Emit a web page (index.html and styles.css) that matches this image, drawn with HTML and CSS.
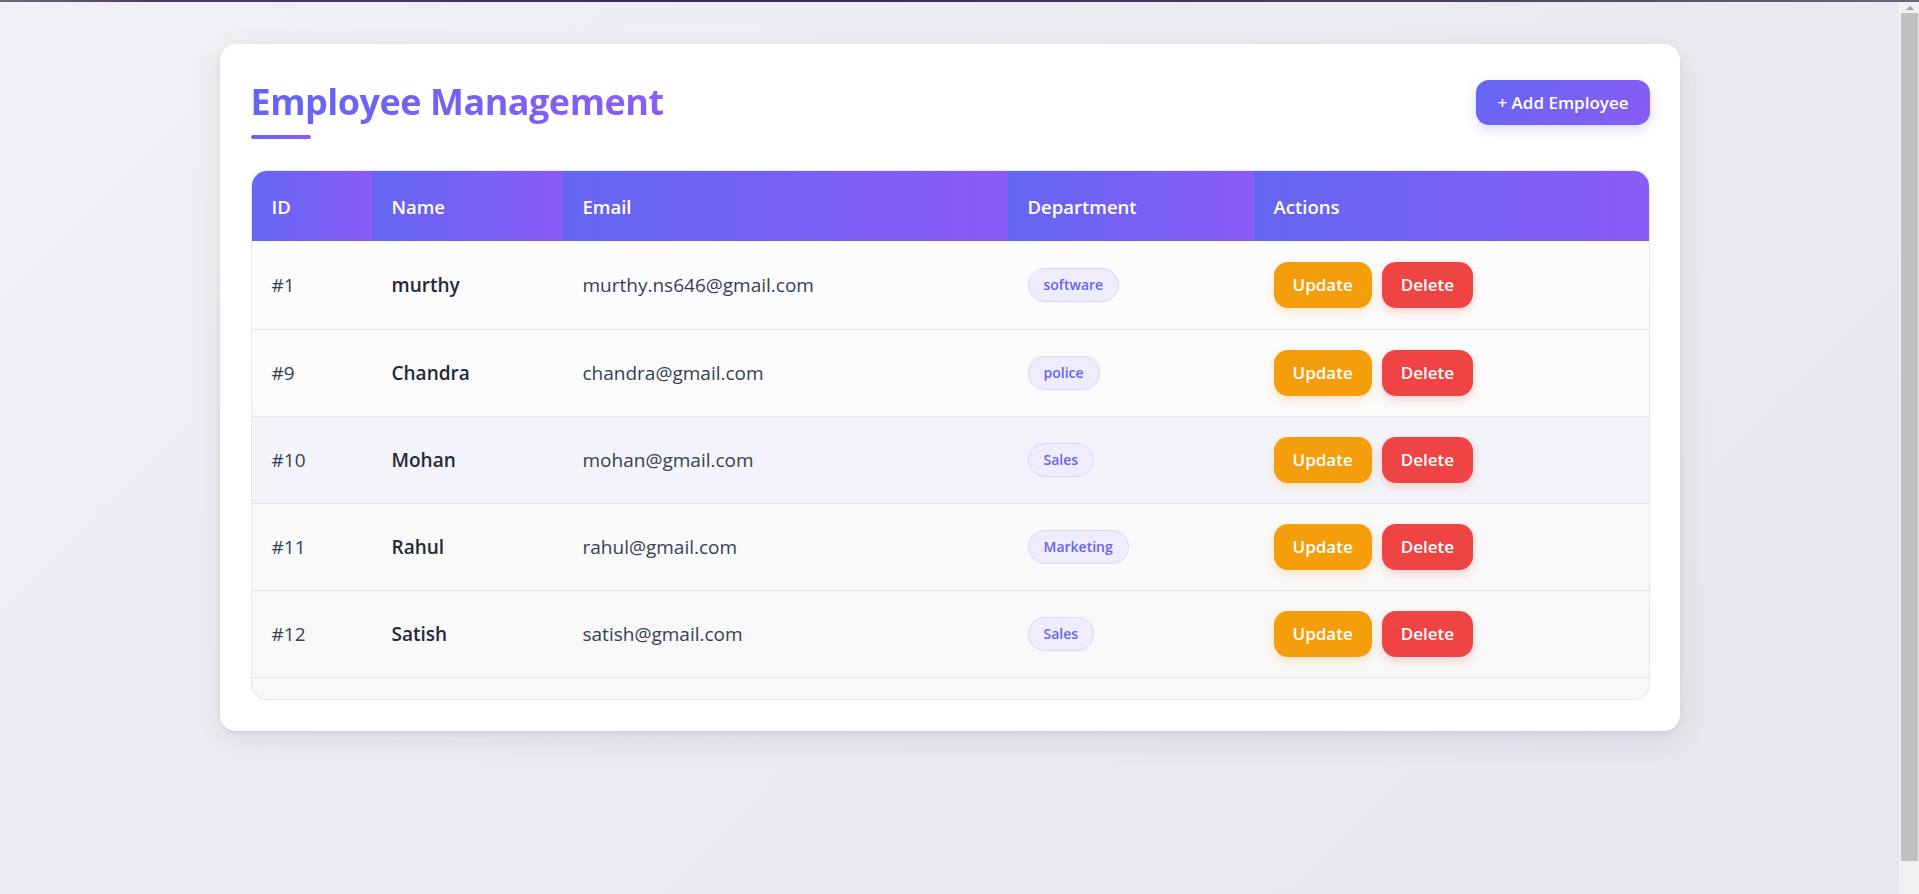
FILE: index.html
```html
<!DOCTYPE html>
<html lang="en">
<head>
<meta charset="utf-8">
<title>Employee Management</title>
<link rel="stylesheet" href="styles.css">
</head>
<body>
<div class="topline"></div>
<div class="frame">
<main class="page">
  <section class="card">
    <header class="card-header">
      <div class="title-block">
        <h1 class="title">Employee Management</h1>
        <span class="title-bar"></span>
      </div>
      <button class="btn-add">+ Add Employee</button>
    </header>

    <div class="table-wrap">
      <table class="emp-table">
        <colgroup>
          <col class="c-id"><col class="c-name"><col class="c-email"><col class="c-dept"><col class="c-act">
        </colgroup>
        <thead>
          <tr><th>ID</th><th>Name</th><th>Email</th><th>Department</th><th>Actions</th></tr>
        </thead>
        <tbody>
          <tr>
            <td class="id">#1</td><td class="name">murthy</td><td class="email">murthy.ns646@gmail.com</td>
            <td><span class="badge">software</span></td>
            <td><div class="actions"><button class="btn btn-update">Update</button><button class="btn btn-delete">Delete</button></div></td>
          </tr>
          <tr>
            <td class="id">#9</td><td class="name">Chandra</td><td class="email">chandra@gmail.com</td>
            <td><span class="badge">police</span></td>
            <td><div class="actions"><button class="btn btn-update">Update</button><button class="btn btn-delete">Delete</button></div></td>
          </tr>
          <tr class="is-hover">
            <td class="id">#10</td><td class="name">Mohan</td><td class="email">mohan@gmail.com</td>
            <td><span class="badge">Sales</span></td>
            <td><div class="actions"><button class="btn btn-update">Update</button><button class="btn btn-delete">Delete</button></div></td>
          </tr>
          <tr>
            <td class="id">#11</td><td class="name">Rahul</td><td class="email">rahul@gmail.com</td>
            <td><span class="badge">Marketing</span></td>
            <td><div class="actions"><button class="btn btn-update">Update</button><button class="btn btn-delete">Delete</button></div></td>
          </tr>
          <tr>
            <td class="id">#12</td><td class="name">Satish</td><td class="email">satish@gmail.com</td>
            <td><span class="badge">Sales</span></td>
            <td><div class="actions"><button class="btn btn-update">Update</button><button class="btn btn-delete">Delete</button></div></td>
          </tr>
        </tbody>
      </table>
      <div class="table-foot"></div>
    </div>
  </section>
</main>
<div class="scrollbar" aria-hidden="true">
  <span class="sb-arrow"></span>
  <span class="sb-thumb"></span>
</div>
</div>
</body>
</html>
```

FILE: styles.css
```css
* { box-sizing: border-box; }

html, body { height: 100%; }

body {
  margin: 0;
  overflow: hidden;
  display: flex;
  flex-direction: column;
  font-family: "Open Sans", "Noto Sans", sans-serif;
  color: #1f2937;
  background: #f0f0f0;
}

.topline {
  height: 2px;
  flex: none;
  background: linear-gradient(90deg, #6d6875 0%, #4a3868 8%, #3b2a5c 40%, #4b3d66 75%, #6b6776 100%);
}

.frame {
  flex: 1;
  display: flex;
  min-height: 0;
}

.page {
  flex: 1;
  display: flex;
  justify-content: center;
  align-items: flex-start;
  padding-top: 42px;
  background: linear-gradient(135deg, #f0f1f4 0%, #e6e7ec 100%);
}

.scrollbar {
  width: 20px;
  flex: none;
  display: flex;
  flex-direction: column;
  align-items: flex-end;
  background: #f0f0f0;
}

.sb-arrow {
  width: 0;
  height: 0;
  margin: 4px 5px 3px 0;
  border-left: 4px solid transparent;
  border-right: 4px solid transparent;
  border-bottom: 4px solid #a3a3a3;
}

.sb-thumb {
  width: 17px;
  height: 848px;
  margin-right: 1px;
  background: #c1c1c1;
}

.card {
  width: 1460px;
  background: #ffffff;
  border-radius: 16px;
  padding: 34px 30px 31px 31px;
  box-shadow: 0 10px 30px rgba(60, 60, 90, 0.10), 0 2px 4px rgba(60, 60, 90, 0.08);
}

.card-header {
  display: flex;
  justify-content: space-between;
  align-items: flex-start;
  margin-bottom: 31px;
}

.title {
  margin: 0;
  font-size: 36px;
  line-height: 48px;
  font-weight: 700;
  letter-spacing: -0.5px;
  background: linear-gradient(90deg, #6366f1, #8b5cf6);
  -webkit-background-clip: text;
  background-clip: text;
  color: transparent;
  display: inline-block;
}

.title-bar {
  display: block;
  width: 60px;
  height: 4px;
  margin-top: 9px;
  border-radius: 2px;
  background: linear-gradient(90deg, #6366f1, #8b5cf6);
}

.btn-add {
  margin-top: 2px;
  height: 45px;
  padding: 0 21px;
  border: none;
  border-radius: 13px;
  font-family: inherit;
  font-size: 17px;
  font-weight: 600;
  color: #ffffff;
  background: linear-gradient(135deg, #6366f1, #8b5cf6);
  box-shadow: 0 4px 12px rgba(99, 102, 241, 0.25);
}

.table-wrap {
  border: 1px solid #e5e7eb;
  border-radius: 16px;
  overflow: hidden;
  background: linear-gradient(180deg, #fdfdfd 0%, #f8f8f8 100%);
}

.emp-table {
  width: 100%;
  border-collapse: collapse;
  table-layout: fixed;
}

.c-id { width: 120px; }
.c-name { width: 191px; }
.c-email { width: 445px; }
.c-dept { width: 246px; }

.emp-table th {
  height: 70px;
  padding: 0 20px;
  text-align: left;
  font-size: 18.5px;
  font-weight: 600;
  color: #ffffff;
  background: linear-gradient(90deg, #6366f1, #8b5cf6);
}

.emp-table tbody tr {
  height: 87px;
  border-bottom: 1px solid #e5e7eb;
}

.emp-table tbody tr:first-child {
  height: 88px;
}

.emp-table tbody tr.is-hover {
  background: #f3f4fa;
  border-bottom-color: #e2e3ee;
}

.emp-table td {
  padding: 0 20px;
  font-size: 19px;
  vertical-align: middle;
}

.id { color: #374151; }
.name { font-weight: 600; color: #1f2937; }
.email { color: #374151; }

.badge {
  display: inline-block;
  height: 34px;
  line-height: 32px;
  padding: 0 15px;
  border-radius: 999px;
  border: 1px solid #d9d6f9;
  background: #efedfd;
  color: #6366f1;
  font-size: 14px;
  font-weight: 600;
}

.actions {
  display: flex;
  gap: 10px;
}

.btn {
  height: 46px;
  padding: 0 19px;
  border: none;
  border-radius: 14px;
  font-family: inherit;
  font-size: 17px;
  font-weight: 600;
  color: #ffffff;
}

.btn-update {
  background: #f59e0b;
  box-shadow: 0 4px 10px rgba(245, 158, 11, 0.22);
}

.btn-delete {
  background: #ef4444;
  box-shadow: 0 4px 10px rgba(239, 68, 68, 0.22);
}

.table-foot {
  height: 21px;
}
```
